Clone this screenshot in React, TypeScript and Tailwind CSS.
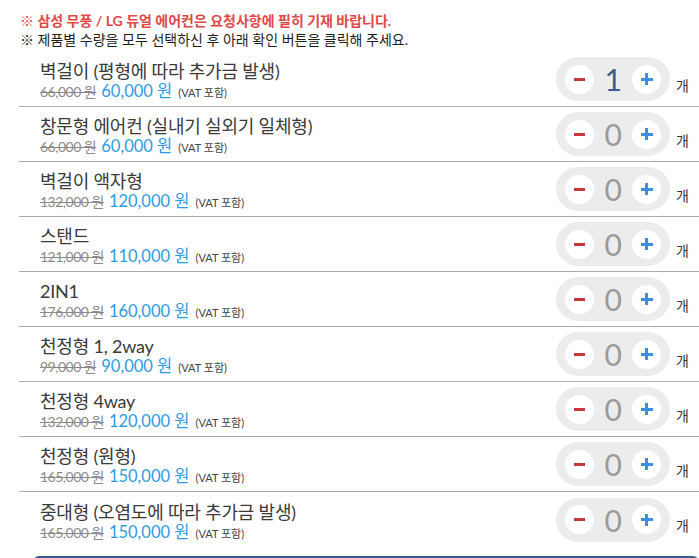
import React from "react";

type Item = { name: string; orig: string; price: string; qty: number };

const items: Item[] = [
  { name: "벽걸이 (평형에 따라 추가금 발생)", orig: "66,000 원", price: "60,000 원", qty: 1 },
  { name: "창문형 에어컨 (실내기 실외기 일체형)", orig: "66,000 원", price: "60,000 원", qty: 0 },
  { name: "벽걸이 액자형", orig: "132,000 원", price: "120,000 원", qty: 0 },
  { name: "스탠드", orig: "121,000 원", price: "110,000 원", qty: 0 },
  { name: "2IN1", orig: "176,000 원", price: "160,000 원", qty: 0 },
  { name: "천정형 1, 2way", orig: "99,000 원", price: "90,000 원", qty: 0 },
  { name: "천정형 4way", orig: "132,000 원", price: "120,000 원", qty: 0 },
  { name: "천정형 (원형)", orig: "165,000 원", price: "150,000 원", qty: 0 },
  { name: "중대형 (오염도에 따라 추가금 발생)", orig: "165,000 원", price: "150,000 원", qty: 0 },
];

function Row({ item, last }: { item: Item; last: boolean }) {
  return (
    <div
      className={
        "h-[55px] flex items-center pl-[21px] " +
        (last ? "" : "border-b border-[#ababab]")
      }
    >
      <div className="flex flex-col pt-[5px]">
        <div className="text-[18px] leading-[21px] text-[#3a3a3a] tracking-[-0.2px]">{item.name}</div>
        <div className="flex items-baseline leading-[18px]">
          <span className="text-[14px] text-[#8a8a8a] line-through tracking-[-0.5px]">{item.orig}</span>
          <span className="ml-[5px] text-[16.5px] text-[#2f9be3]">{item.price}</span>
          <span className="ml-[6px] text-[11px] text-[#444]">(VAT 포함)</span>
        </div>
      </div>
      <div className="ml-auto flex items-center mr-[10px]">
        <div className="w-[114px] h-[44px] rounded-full bg-[#ececec] flex items-center justify-between px-[9px]">
          <button className="w-[29px] h-[29px] rounded-full bg-white flex items-center justify-center">
            <span className="block w-[11px] h-[3px] bg-[#c8373a]" />
          </button>
          <span
            className={
              "text-[30px] leading-none " +
              (item.qty > 0 ? "text-[#3c5a95]" : "text-[#9a9a9a]")
            }
          >
            {item.qty}
          </span>
          <button className="w-[29px] h-[29px] rounded-full bg-white flex items-center justify-center relative">
            <span className="block w-[12px] h-[3px] bg-[#3b8fe3]" />
            <span className="absolute w-[3px] h-[12px] bg-[#3b8fe3]" />
          </button>
        </div>
        <span className="ml-[6px] mt-[12px] text-[14px] text-[#333]">개</span>
      </div>
    </div>
  );
}

export default function App() {
  return (
    <div
      className="w-[699px] h-[558px] overflow-hidden bg-white"
      style={{ fontFamily: 'Lato, "Noto Sans CJK KR", sans-serif' }}
    >
      <div className="pl-[20px] pt-[11px] text-[14px] leading-[19px]">
        <p className="text-[#e04848] font-bold">※ 삼성 무풍 / LG 듀얼 에어컨은 요청사항에 필히 기재 바랍니다.</p>
        <p className="text-[#1e1e1e]">※ 제품별 수량을 모두 선택하신 후 아래 확인 버튼을 클릭해 주세요.</p>
      </div>
      <div className="ml-[19px] mt-[3px]">
        {items.map((it, i) => (
          <Row key={i} item={it} last={i === items.length - 1} />
        ))}
      </div>
      <div className="ml-[33px] mt-[9px] h-[40px] rounded-t-[6px] bg-[#3a5f88]" />
    </div>
  );
}
